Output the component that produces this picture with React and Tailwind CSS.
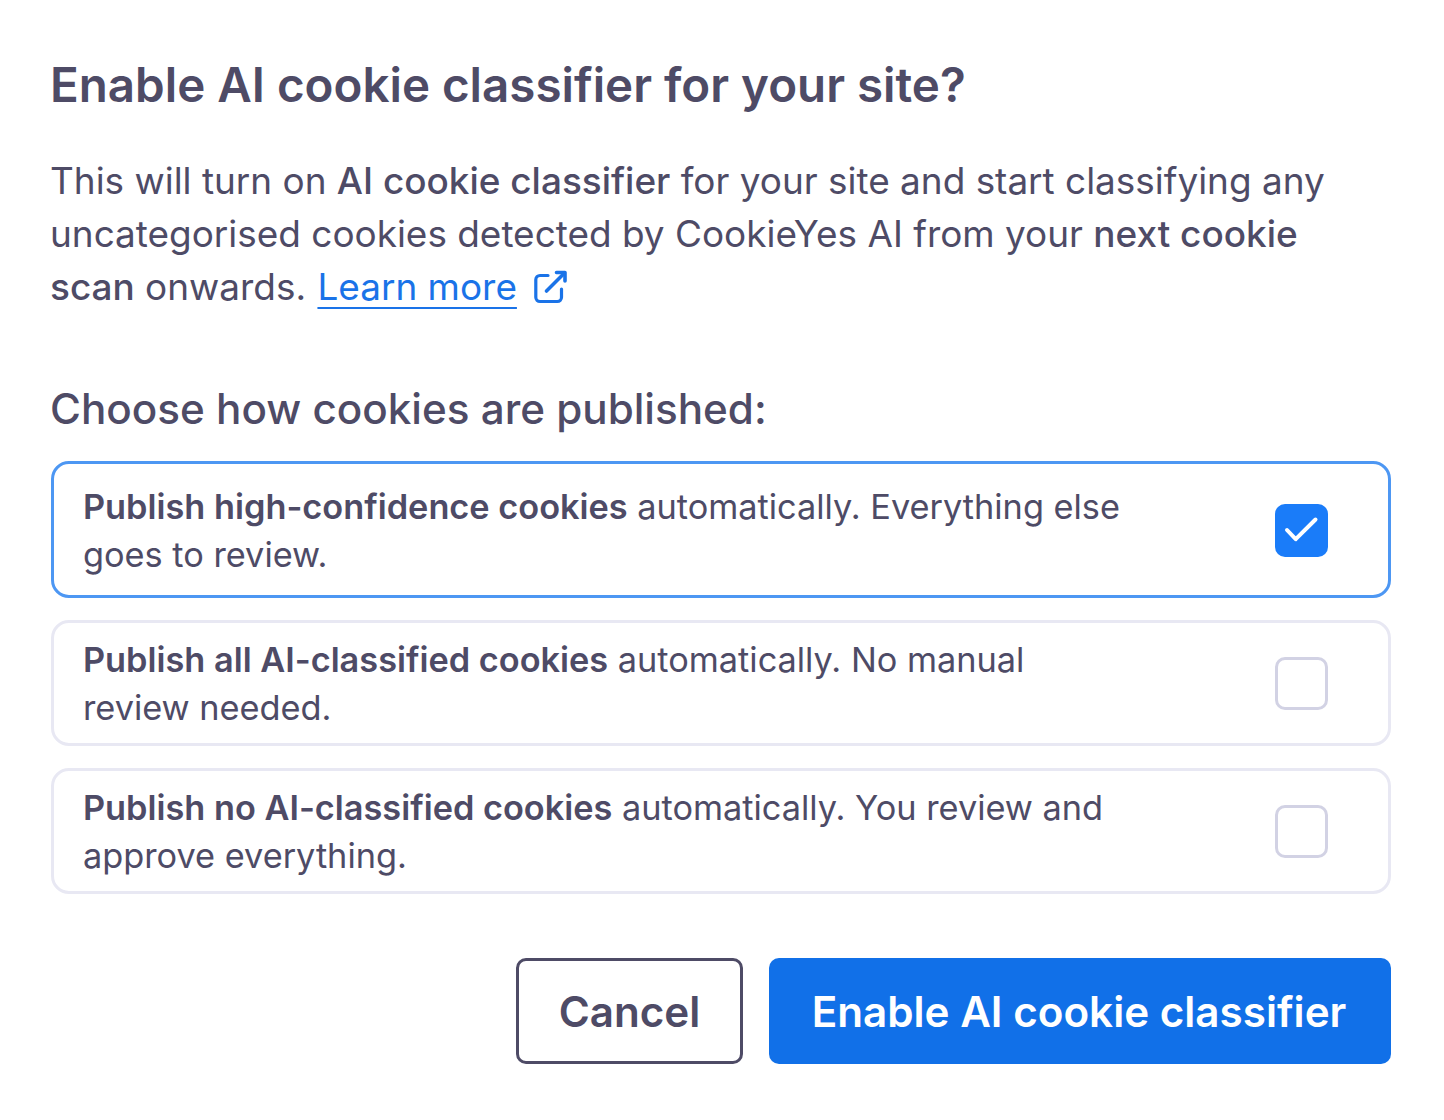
import React from "react";

function Option({ active, bold, rest, second }) {
  return (
    <div className={`flex items-center justify-between rounded-[18px] border-[3px] pl-[29px] pr-[60px] ${active ? "border-[#4d97f3] pt-[18px] pb-[17px]" : "border-[#e8e8f3] py-[12px]"}`}>
      <p className="-mb-[1px] w-[1080px] pt-[1px] text-[34.3px] leading-[48px] text-[#4e4b66]">
        <span className="font-semibold">{bold}</span> {rest}
        <br />
        {second}
      </p>
      {active ? (
        <span className="flex h-[53px] w-[53px] items-center justify-center rounded-[10px] bg-[#1a7cf9]">
          <svg width="53" height="53" viewBox="0 0 53 53" fill="none" stroke="#fff" strokeWidth="4" strokeLinecap="round" strokeLinejoin="round">
            <path d="M12 26 20.7 35.2 40.5 15.5" />
          </svg>
        </span>
      ) : (
        <span className="h-[53px] w-[53px] rounded-[10px] border-[3px] border-[#d2d2e4] bg-white" />
      )}
    </div>
  );
}

export default function App() {
  return (
    <div className="h-[1120px] w-[1444px] bg-white px-[51px] pt-[56px] text-[#4e4b66]" style={{ fontFamily: "Inter, sans-serif" }}>
      <h1 className="-ml-px text-[47.5px] font-semibold leading-[58px]">Enable AI cookie classifier for your site?</h1>
      <p className="-ml-px mt-[40px] text-[36.93px] leading-[53px]">
        This will turn on <span className="font-medium">AI cookie classifier</span> for your site and start classifying any
        <br />
        uncategorised cookies detected by CookieYes AI from your <span className="font-medium">next cookie</span>
        <br />
        <span className="font-medium">scan</span> onwards.{" "}
        <a className="ml-px text-[#1a73e8] underline decoration-2 underline-offset-[7px]">Learn more</a>
        <svg className="ml-[15px] inline-block align-[-5px]" width="36" height="36" viewBox="0 0 36 36" fill="none" stroke="#1a73e8" strokeWidth="3.2" strokeLinecap="round" strokeLinejoin="round">
          <path d="M16 6.5H8a4.2 4.2 0 0 0-4.2 4.2v17.6A4.2 4.2 0 0 0 8 32.5h17.3a4.2 4.2 0 0 0 4.2-4.2V20" />
          <path d="M24.5 3.5h8.5V12" strokeWidth="3.6" />
          <path d="M32 4.5 14.5 22" strokeWidth="3.6" />
        </svg>
      </p>
      <h2 className="-ml-px mt-[69px] text-[42.2px] font-medium leading-[54px]">Choose how cookies are published:</h2>
      <div className="mt-[25px] flex w-[1340px] flex-col gap-[22px]">
        <Option active bold="Publish high-confidence cookies" rest="automatically. Everything else" second="goes to review." />
        <Option bold="Publish all AI-classified cookies" rest="automatically. No manual" second="review needed." />
        <Option bold="Publish no AI-classified cookies" rest="automatically. You review and" second="approve everything." />
      </div>
      <div className="mt-[64px] flex w-[1340px] justify-end gap-[26px]">
        <button className="h-[106px] w-[227px] rounded-[10px] border-[3px] border-[#4e4b66] bg-white pt-[2px] text-[42.2px] font-semibold text-[#4e4b66]">Cancel</button>
        <button className="h-[106px] w-[622px] rounded-[10px] bg-[#1170e8] pr-[2px] pt-[2px] text-[42.2px] font-semibold text-white">Enable AI cookie classifier</button>
      </div>
    </div>
  );
}
